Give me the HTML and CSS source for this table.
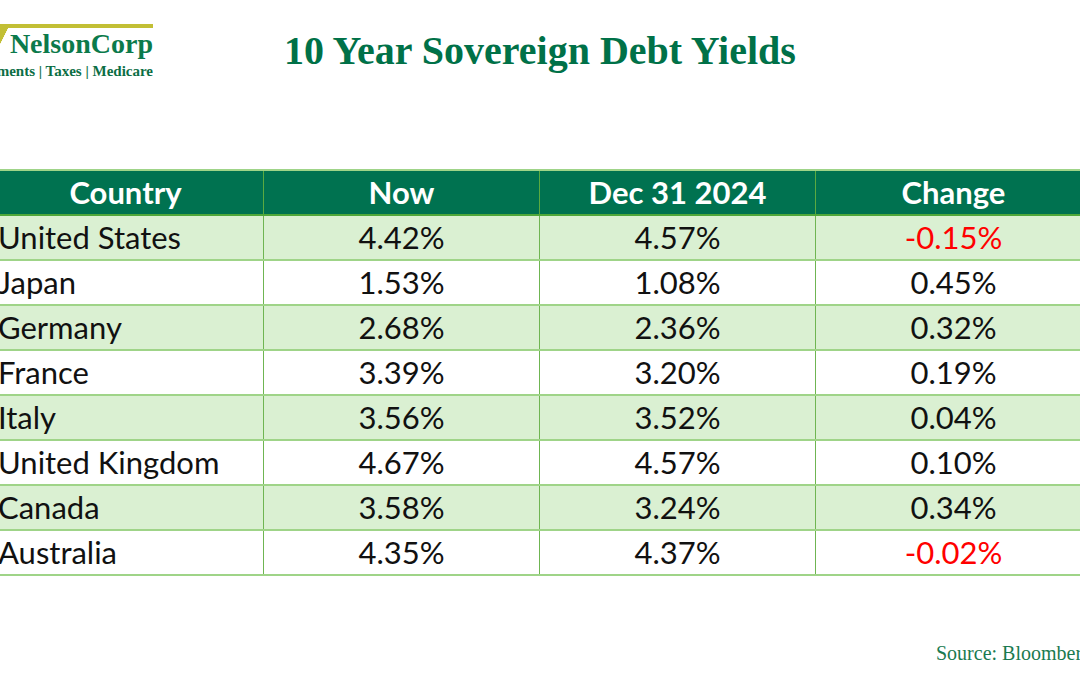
FILE: index.html
```html
<!DOCTYPE html>
<html>
<head>
<meta charset="utf-8">
<link rel="stylesheet" href="styles.css">
</head>
<body>
<div class="page">
  <header class="top">
    <div class="logo">
      <div class="logo-bar"></div>
      <div class="logo-name"><span class="logo-check"></span>NelsonCorp</div>
      <div class="logo-tag">Investments | Taxes | Medicare</div>
    </div>
    <h1 class="title">10 Year Sovereign Debt Yields</h1>
  </header>
  <div class="table-wrap">
    <table class="yields">
      <thead>
        <tr><th class="c-country">Country</th><th>Now</th><th>Dec 31 2024</th><th>Change</th></tr>
      </thead>
      <tbody>
        <tr class="alt"><td class="c-country">United States</td><td>4.42%</td><td>4.57%</td><td class="neg">-0.15%</td></tr>
        <tr><td class="c-country">Japan</td><td>1.53%</td><td>1.08%</td><td>0.45%</td></tr>
        <tr class="alt"><td class="c-country">Germany</td><td>2.68%</td><td>2.36%</td><td>0.32%</td></tr>
        <tr><td class="c-country">France</td><td>3.39%</td><td>3.20%</td><td>0.19%</td></tr>
        <tr class="alt"><td class="c-country">Italy</td><td>3.56%</td><td>3.52%</td><td>0.04%</td></tr>
        <tr><td class="c-country">United Kingdom</td><td>4.67%</td><td>4.57%</td><td>0.10%</td></tr>
        <tr class="alt"><td class="c-country">Canada</td><td>3.58%</td><td>3.24%</td><td>0.34%</td></tr>
        <tr><td class="c-country">Australia</td><td>4.35%</td><td>4.37%</td><td class="neg">-0.02%</td></tr>
      </tbody>
    </table>
  </div>
  <div class="source">Source: Bloomberg</div>
</div>
</body>
</html>
```
FILE: styles.css
```css
html, body {
  margin: 0;
  padding: 0;
  background: #ffffff;
}
.page {
  width: 1080px;
  height: 675px;
  overflow: hidden;
  position: relative;
}
.top {
  height: 169px;
  position: relative;
}
.logo {
  position: absolute;
  left: 0;
  top: 24px;
  width: 153px;
  overflow: hidden;
}
.logo-bar {
  height: 4px;
  background: #c2bf35;
}
.logo-name {
  display: flex;
  align-items: flex-end;
  height: 32px;
  font-family: "Liberation Serif", serif;
  font-weight: bold;
  font-size: 28px;
  color: #0b7a4b;
  line-height: 32px;
  white-space: nowrap;
}
.logo-check {
  display: inline-block;
  width: 9px;
  height: 18px;
  margin-right: 1px;
  background: linear-gradient(to bottom right, #c2bf35 0 45%, transparent 46%);
  align-self: flex-start;
}
.logo-tag {
  margin-top: 3px;
  font-family: "Liberation Serif", serif;
  font-weight: bold;
  font-size: 15px;
  color: #0b6e45;
  white-space: nowrap;
  direction: rtl;
  text-align: right;
  line-height: 16px;
}
.title {
  margin: 0;
  padding-top: 29px;
  text-align: center;
  font-family: "Liberation Serif", serif;
  font-weight: bold;
  font-size: 40px;
  color: #007148;
  line-height: 44px;
}
.table-wrap {
  margin-left: -13px;
}
.yields {
  border-collapse: collapse;
  table-layout: fixed;
  width: 1104px;
  font-family: Lato, "Liberation Sans", sans-serif;
  font-size: 31px;
}
.yields th, .yields td {
  width: 276px;
  height: 45px;
  padding: 0;
  text-align: center;
  border-top: 2px solid #9fd488;
  border-bottom: 2px solid #9fd488;
  border-left: 1.5px solid #6fb552;
  border-right: 1.5px solid #6fb552;
  box-sizing: border-box;
  color: #111;
  line-height: 41px;
}
.yields thead th {
  background: #007250;
  color: #ffffff;
  font-weight: bold;
  border-left-color: #5aaa40;
  border-right-color: #5aaa40;
  border-bottom-color: #4fa83a;
}
.yields tr.alt td {
  background: #daf0d2;
}
.yields td.c-country {
  text-align: left;
  padding-left: 10px;
}
.yields th.c-country {
  text-align: center;
}
.yields td.neg {
  color: #ff0000;
}
.source {
  position: absolute;
  left: 936px;
  top: 642px;
  font-family: "Liberation Serif", serif;
  font-size: 20px;
  color: #1a7a50;
  white-space: nowrap;
}
```
